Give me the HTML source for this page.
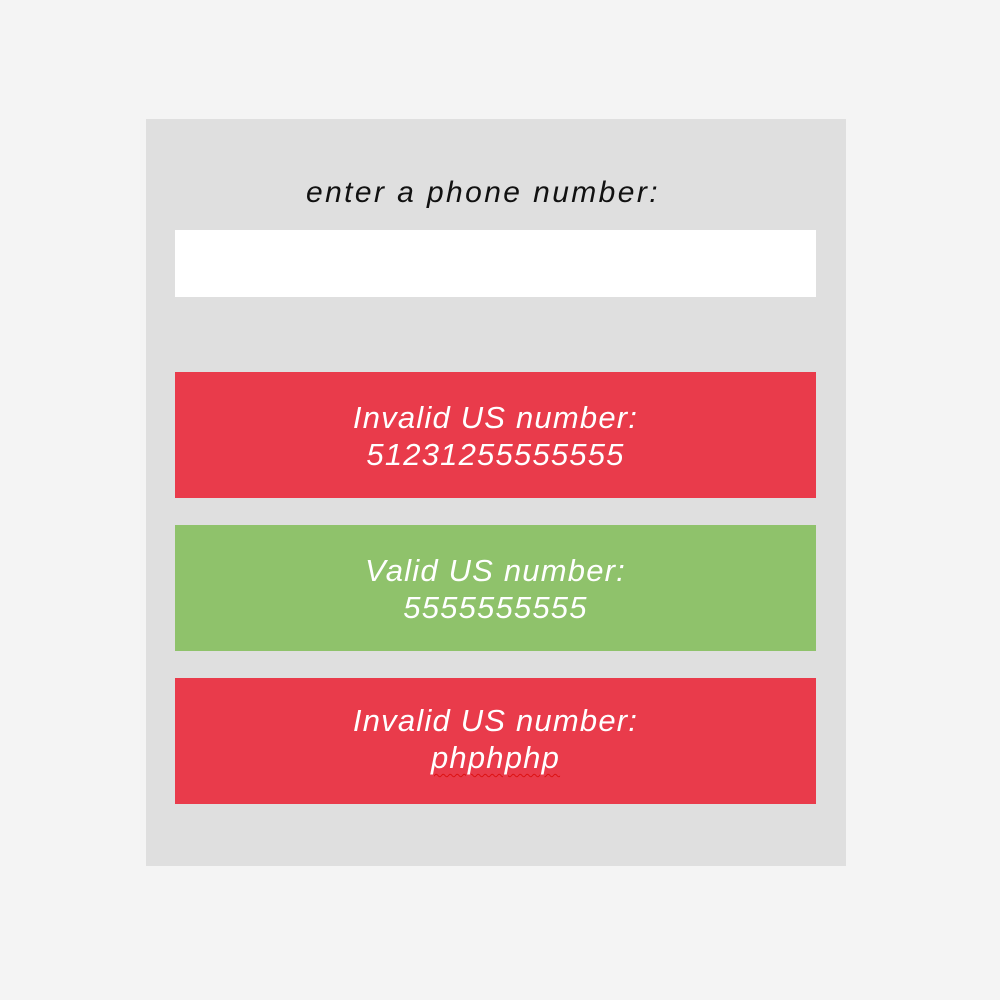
<!DOCTYPE html>
<html><head><style>
html,body{margin:0;padding:0;background:#f4f4f4;width:1000px;height:1000px;overflow:hidden}
.card{position:absolute;left:146px;top:119px;width:700px;height:747px;background:#dfdfdf}
.lbl{position:absolute;width:700px;top:176px;text-align:center;font:italic 30px "Liberation Sans",sans-serif;letter-spacing:2.4px;color:#111}
.inp{position:absolute;left:175px;top:230px;width:641px;height:67px;background:#fff}
.box{position:absolute;left:175px;width:641px;height:126px;color:#fff;font:italic 31px "Liberation Sans",sans-serif;letter-spacing:1.2px;text-align:center;line-height:37px;box-sizing:border-box;padding-top:27px}
.r{background:#e93b4b}.g{background:#8fc26b}
.sq{text-decoration:underline wavy #d11;text-underline-offset:5px;text-decoration-thickness:1px}
</style></head><body>
<div class="card"></div>
<div class="lbl" style="left:133px">enter a phone number:</div>
<div class="inp"></div>
<div class="box r" style="top:372px">Invalid US number:<br>51231255555555</div>
<div class="box g" style="top:525px">Valid US number:<br>5555555555</div>
<div class="box r" style="top:678px;padding-top:24px">Invalid US number:<br><span class="sq">phphphp</span></div>
</body></html>
